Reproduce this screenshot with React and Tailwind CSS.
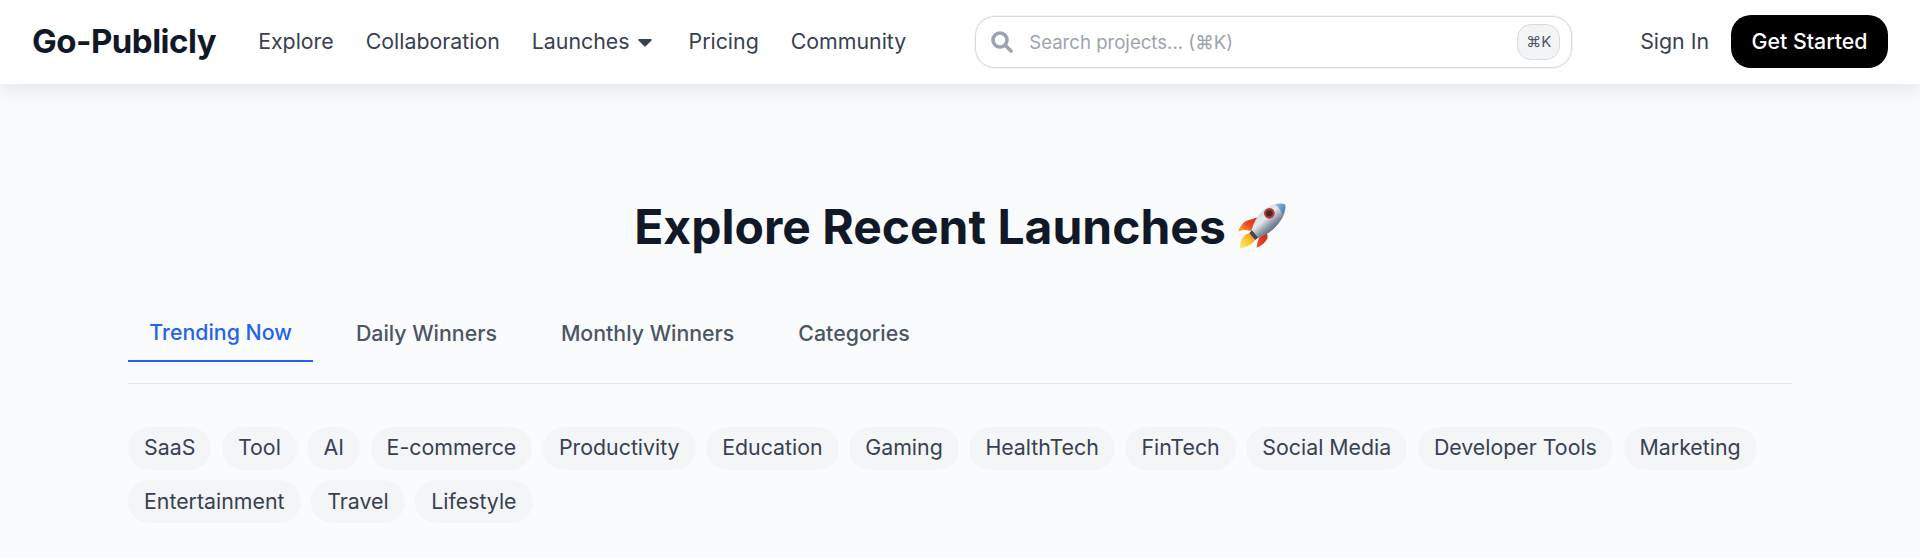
import React from "react";

const nav = ["Explore", "Collaboration", "Launches", "Pricing", "Community"];
const tabs = ["Trending Now", "Daily Winners", "Monthly Winners", "Categories"];
const chips = ["SaaS","Tool","AI","E-commerce","Productivity","Education","Gaming","HealthTech","FinTech","Social Media","Developer Tools","Marketing","Entertainment","Travel","Lifestyle"];

function Rocket() {
  return (
    <svg viewBox="0 0 168 192" className="w-[56px] h-[64px] ml-1 -my-0.5 shrink-0" aria-hidden="true">
      <defs>
        <linearGradient id="body" x1="0.1" y1="0.1" x2="0.8" y2="0.9">
          <stop offset="0" stopColor="#c4ccd6" />
          <stop offset="0.42" stopColor="#e6eaef" />
          <stop offset="0.68" stopColor="#7f8b9c" />
          <stop offset="1" stopColor="#3f4a5c" />
        </linearGradient>
        <linearGradient id="nose" x1="0" y1="0" x2="1" y2="1">
          <stop offset="0" stopColor="#9cc4e8" />
          <stop offset="1" stopColor="#3c6fae" />
        </linearGradient>
        <linearGradient id="fin" x1="0" y1="1" x2="1" y2="0">
          <stop offset="0" stopColor="#fbb32a" />
          <stop offset="0.5" stopColor="#ee4a20" />
          <stop offset="1" stopColor="#d9231f" />
        </linearGradient>
        <linearGradient id="fin2" x1="0" y1="1" x2="1" y2="0">
          <stop offset="0" stopColor="#f2511f" />
          <stop offset="1" stopColor="#c81e1e" />
        </linearGradient>
        <linearGradient id="flame" x1="0" y1="1" x2="1" y2="0">
          <stop offset="0" stopColor="#fff07a" />
          <stop offset="0.6" stopColor="#fbc02d" />
          <stop offset="1" stopColor="#f07a1a" />
        </linearGradient>
      </defs>
      <path d="M24 110 C30 95 38 84 48 78 L84 67 L66 108 L40 104 Z" fill="url(#fin)" />
      <path d="M80 158 C81 145 84 135 90 124 L109 99 L113 128 C107 142 95 152 80 158 Z" fill="url(#fin2)" />
      <path d="M29 161 C29 146 33 132 43 122 C50 115 58 114 64 118 L76 133 C72 145 50 158 29 161 Z" fill="url(#flame)" />
      <path d="M58 114 L70 103 L88 125 L76 135 Z" fill="#3f4654" />
      <path d="M165 28 C150 22 118 28 95 50 C80 65 70 85 65 105 L85 128 C105 122 125 110 140 92 C160 70 170 45 165 28 Z" fill="url(#body)" />
      <path d="M165 28 C155 24 145 25 135 29 C148 38 155 48 158 60 C165 48 168 38 165 28 Z" fill="url(#nose)" />
      <circle cx="118" cy="55" r="16" fill="#b9362f" />
      <circle cx="118" cy="55" r="9.5" fill="#3a2a33" />
    </svg>
  );
}

export default function App() {
  return (
    <div className="min-h-[559px] bg-[#fafbfc] font-['Inter',sans-serif]">
      <header className="h-[84px] bg-white shadow-[0_4px_20px_rgba(0,0,0,0.1)] px-8 flex items-center">
        <div className="text-[33px] font-bold text-[#111827] tracking-[-0.5px] whitespace-nowrap">Go-Publicly</div>
        <nav className="flex items-center gap-8 ml-[42px] text-[21.33px] text-[#374151]">
          {nav.map((n) => (
            <div key={n} className="flex items-center gap-2 whitespace-nowrap">
              {n}
              {n === "Launches" && (
                <svg viewBox="0 0 14 9" className="w-[14px] h-[9px] mt-0.5 mr-[5px]" aria-hidden="true">
                  <path d="M1.2 1h11.6a.9.9 0 0 1 .7 1.5L7.7 8.2a1 1 0 0 1-1.4 0L.5 2.5A.9.9 0 0 1 1.2 1z" fill="#374151" />
                </svg>
              )}
            </div>
          ))}
        </nav>
        <div className="ml-[69px] w-[597px] h-[52px] bg-white border border-[#d8dade] rounded-[20px] shadow-[0_0_0_1px_#f3f4f6] flex items-center pl-[15px] pr-[11px]">
          <svg viewBox="0 0 22 22" className="w-[22px] h-[22px] shrink-0" aria-hidden="true">
            <circle cx="9" cy="9" r="7" fill="none" stroke="#9ca3af" strokeWidth="3.6" />
            <path d="M14.500 14.500 L20 20" fill="none" stroke="#9ca3af" strokeWidth="3.6" strokeLinecap="round" />
          </svg>
          <span className="ml-4 mt-0.5 text-[18.6px] text-[#9ca3af] whitespace-nowrap">Search projects... (⌘K)</span>
          <span className="ml-auto w-[43px] h-[36px] rounded-[14px] bg-[#f3f4f6] border border-[#d8dade] flex items-center justify-center text-[15px] text-[#4b5563]">⌘K</span>
        </div>
        <div className="ml-auto flex items-center gap-[22px]">
          <span className="text-[21.33px] text-[#374151] whitespace-nowrap">Sign In</span>
          <span className="h-[53px] w-[157px] -mt-px rounded-[20px] bg-black text-white text-[21.33px] font-medium flex items-center justify-center whitespace-nowrap">Get Started</span>
        </div>
      </header>
      <main className="px-32">
        <h1 className="mt-[113px] flex items-center justify-center text-[48px] leading-[60px] font-bold text-[#111827]">
          Explore Recent Launches
          <Rocket />
        </h1>
        <div className="mt-[49px] border-b border-[#e5e7eb] h-[78px] flex gap-[21.33px]">
          {tabs.map((t, i) => (
            <div key={t} className={i === 0
              ? "h-[56px] px-[21.33px] flex items-center text-[21.33px] font-medium text-[#2563eb] border-b-2 border-[#2563eb] whitespace-nowrap"
              : "h-[56px] px-[21.33px] flex items-center text-[21.33px] font-medium text-[#4b5563] whitespace-nowrap"}>
              {t}
            </div>
          ))}
        </div>
        <div className="mt-[43px] flex flex-wrap gap-[10.67px]">
          {chips.map((c) => (
            <span key={c} className="h-[42.67px] px-4 rounded-full bg-[#f4f5f7] text-[#374151] text-[21.33px] flex items-center whitespace-nowrap">{c}</span>
          ))}
        </div>
      </main>
    </div>
  );
}
